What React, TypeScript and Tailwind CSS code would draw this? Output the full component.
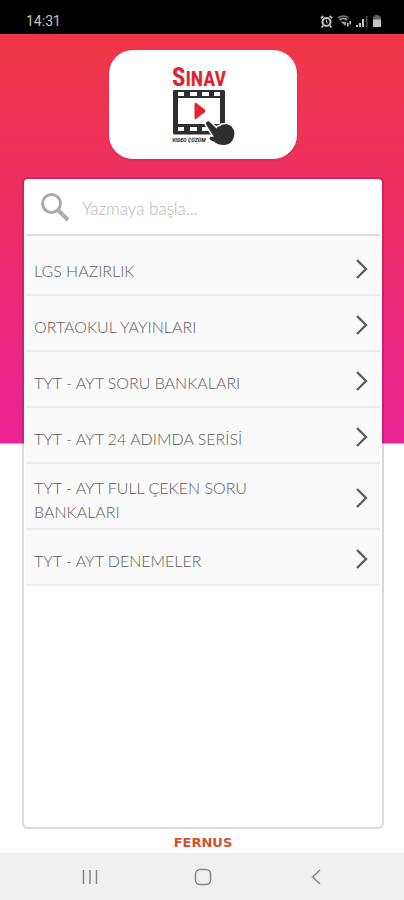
import { useState } from 'react'

const CATEGORIES = [
  'LGS HAZIRLIK',
  'ORTAOKUL YAYINLARI',
  'TYT - AYT SORU BANKALARI',
  'TYT - AYT 24 ADIMDA SERİSİ',
  'TYT - AYT FULL ÇEKEN SORU BANKALARI',
  'TYT - AYT DENEMELER',
]

function StatusBar() {
  return (
    <header className="flex h-[34px] shrink-0 items-center justify-between bg-black pt-2 pr-[22px] pl-[26px]">
      <span className="font-['Roboto',sans-serif] text-sm leading-4 text-[#c4c4c4]">14:31</span>
      <div className="flex items-center gap-1 text-[#c4c4c4]">
        <svg className="h-[13px] w-[13px]" viewBox="0 0 13 13" fill="none" stroke="currentColor" aria-hidden>
          <circle cx="6.5" cy="7" r="4" strokeWidth="2" />
          <path d="M1 3.2 3.4 1M12 3.2 9.6 1M3 10.8 1.6 12.4M10 10.8l1.4 1.6" strokeWidth="1.8" />
          <path d="M6.5 4.8V7.2l1.4.9" strokeWidth="1" />
        </svg>
        <svg className="h-3 w-[15px]" viewBox="0 0 15 12" fill="none" stroke="currentColor" aria-hidden>
          <path d="M1 2.8C4 .4 8.5.4 11.5 2.8" strokeWidth="1.5" opacity=".6" />
          <path d="M2.5 5C4.8 3 8 3 10 5" strokeWidth="1.8" opacity=".8" />
          <path d="M3.5 6.5 8.5 11 9.5 7Z" fill="currentColor" stroke="none" opacity=".8" />
          <path d="M10.8 8v3.5M13.2 6v3.5" strokeWidth="1.5" />
        </svg>
        <svg className="h-3 w-3" viewBox="0 0 12 12" fill="currentColor" aria-hidden>
          <path d="M0 10h2v2H0zM3 8h2v4H3zM6 4h2v8H6z" />
          <path d="M10 1h1.5v11H10z" opacity=".4" />
        </svg>
        <svg className="h-3 w-2.5" viewBox="0 0 10 12" fill="currentColor" aria-hidden>
          <path d="M3 0h4v1.5h2V5H1V1.5h2z" opacity=".5" />
          <path d="M1 4.5h8V12H1z" />
        </svg>
      </div>
    </header>
  )
}

function Logo() {
  return (
    <svg className="h-[84px] w-[68px]" viewBox="169 63 68 84" role="img" aria-label="Sınav Video Çözüm">
      <text
        x="199"
        y="86"
        textAnchor="middle"
        fill="#e3222f"
        className="font-['Roboto_Condensed','Roboto',sans-serif] text-[20px] font-bold"
      >
        <tspan className="text-[25px]">S</tspan>INAV
      </text>
      <path
        fillRule="evenodd"
        fill="#2e2e30"
        d="M174.5 90h49q1.5 0 1.5 1.5v41.5q0 1.5-1.5 1.5h-49q-1.5 0-1.5-1.5v-41.5q0-1.5 1.5-1.5zM178 98v26h42V98zM178 92v4h6v-4zM190 92v4h7v-4zM202 92v4h7v-4zM214 92v4h6v-4zM178 127v4h6v-4zM190 127v4h7v-4zM202 127v4h7v-4z"
      />
      <path
        d="M194.500 104q0-2 1.800-1l8.500 6.500q1.500 1.500 0 2.800l-8.500 6.500q-1.800 1-1.800-1z"
        fill="#e3222f"
      />
      <path
        d="M206.500 122q2-1.500 3.800.5l6.200 6q1-2.500 3.500-2.300 1.500-2.300 4-1.600 2.500-1.500 4.500.5 3 .2 4 3 2.500 3 1.700 7c-.5 6-4.700 10-10.200 10-5 0-8-1.500-10-3.500-2-.5-4.500-1.500-4.500-3.300.5-2 3-1.700 4.500-1.300l-7.700-12.300q-1-1.500.2-2.700z"
        fill="#2e2e30"
        stroke="#fff"
        strokeWidth="3"
        paintOrder="stroke"
        strokeLinejoin="round"
      />
      <text
        x="172"
        y="142"
        fill="#2e2e30"
        className="font-['Roboto_Condensed','Roboto',sans-serif] text-[6px] font-bold italic"
      >
        VIDEO ÇÖZÜM
      </text>
    </svg>
  )
}

function CategoryRow({ name }: { name: string }) {
  return (
    <li className="border-b-2 border-[#ededed] bg-[#fafafa]">
      <button type="button" className="flex min-h-[54px] w-full items-center justify-between pt-2 pr-3 pb-1 pl-2 text-left">
        <span className="max-w-[240px] pt-1 text-base leading-6 font-light text-[#5c5c5c]">{name}</span>
        <svg
          className="h-5 w-3 shrink-0"
          viewBox="0 0 12 20"
          fill="none"
          stroke="#5e5e5e"
          strokeWidth="2.4"
          aria-hidden
        >
          <path d="m1 1 9 9-9 9" />
        </svg>
      </button>
    </li>
  )
}

function NavigationBar() {
  return (
    <nav className="grid h-[47px] shrink-0 grid-cols-3 items-center bg-[#f0f0f0] pr-8 pl-[34px] text-[#858585]">
      <button type="button" aria-label="Recent apps" className="flex justify-center">
        <svg className="h-4 w-4" viewBox="0 0 16 16" fill="none" stroke="currentColor" strokeWidth="1.5">
          <path d="M1.5 1v14M8 1v14M14.5 1v14" />
        </svg>
      </button>
      <button type="button" aria-label="Home" className="flex justify-center">
        <svg className="h-[18px] w-[18px]" viewBox="0 0 18 18" fill="none" stroke="currentColor" strokeWidth="1.5">
          <rect x="1.5" y="1.5" width="15" height="15" rx="4.5" />
        </svg>
      </button>
      <button type="button" aria-label="Back" className="flex justify-center">
        <svg className="h-4 w-2.5" viewBox="0 0 10 16" fill="none" stroke="currentColor" strokeWidth="1.5">
          <path d="M9 1 1.5 8 9 15" />
        </svg>
      </button>
    </nav>
  )
}

export default function App() {
  const [query, setQuery] = useState('')

  const visible = CATEGORIES.filter((name) =>
    name.toLocaleLowerCase('tr').includes(query.toLocaleLowerCase('tr'))
  )

  return (
    <div className="flex min-h-screen flex-col bg-white font-['Lato',sans-serif]">
      <StatusBar />

      <main className="flex grow flex-col items-center bg-[linear-gradient(#f03746,#ee2c6b_50%,#ec2496)] bg-[length:100%_50%] bg-no-repeat pt-4 pr-5 pl-[22px]">
        <div className="flex h-[109px] w-[188px] items-center justify-center rounded-3xl bg-white shadow">
          <Logo />
        </div>

        <section className="mt-[18px] flex w-full grow flex-col rounded-md border-2 border-black/15 bg-white bg-clip-padding px-0.5">
          <label className="flex h-[57px] items-center gap-3 border-b-2 border-[#dedede] pl-3.5">
            <svg className="h-[30px] w-[30px] shrink-0" viewBox="0 0 30 30" fill="none" stroke="#ababab" aria-hidden>
              <circle cx="11.5" cy="11.5" r="9" strokeWidth="3" />
              <path d="m18 18 10 10" strokeWidth="4" />
            </svg>
            <input
              type="text"
              aria-label="Ara"
              value={query}
              onChange={(e) => setQuery(e.target.value)}
              placeholder="Yazmaya başla..."
              className="w-full min-w-0 pt-1 text-[17px] font-light text-[#5c5c5c] outline-none placeholder:text-[#b4b4b4]"
            />
          </label>
          <ul className="bg-[#fafafa] pt-1">
            {visible.map((name) => (
              <CategoryRow key={name} name={name} />
            ))}
          </ul>
        </section>

        <p className="pt-1.5 pb-0.5 font-['DejaVu_Sans',sans-serif] text-[13px] leading-4 font-bold text-[#d6502f]">
          FERNUS
        </p>
      </main>

      <NavigationBar />
    </div>
  )
}
